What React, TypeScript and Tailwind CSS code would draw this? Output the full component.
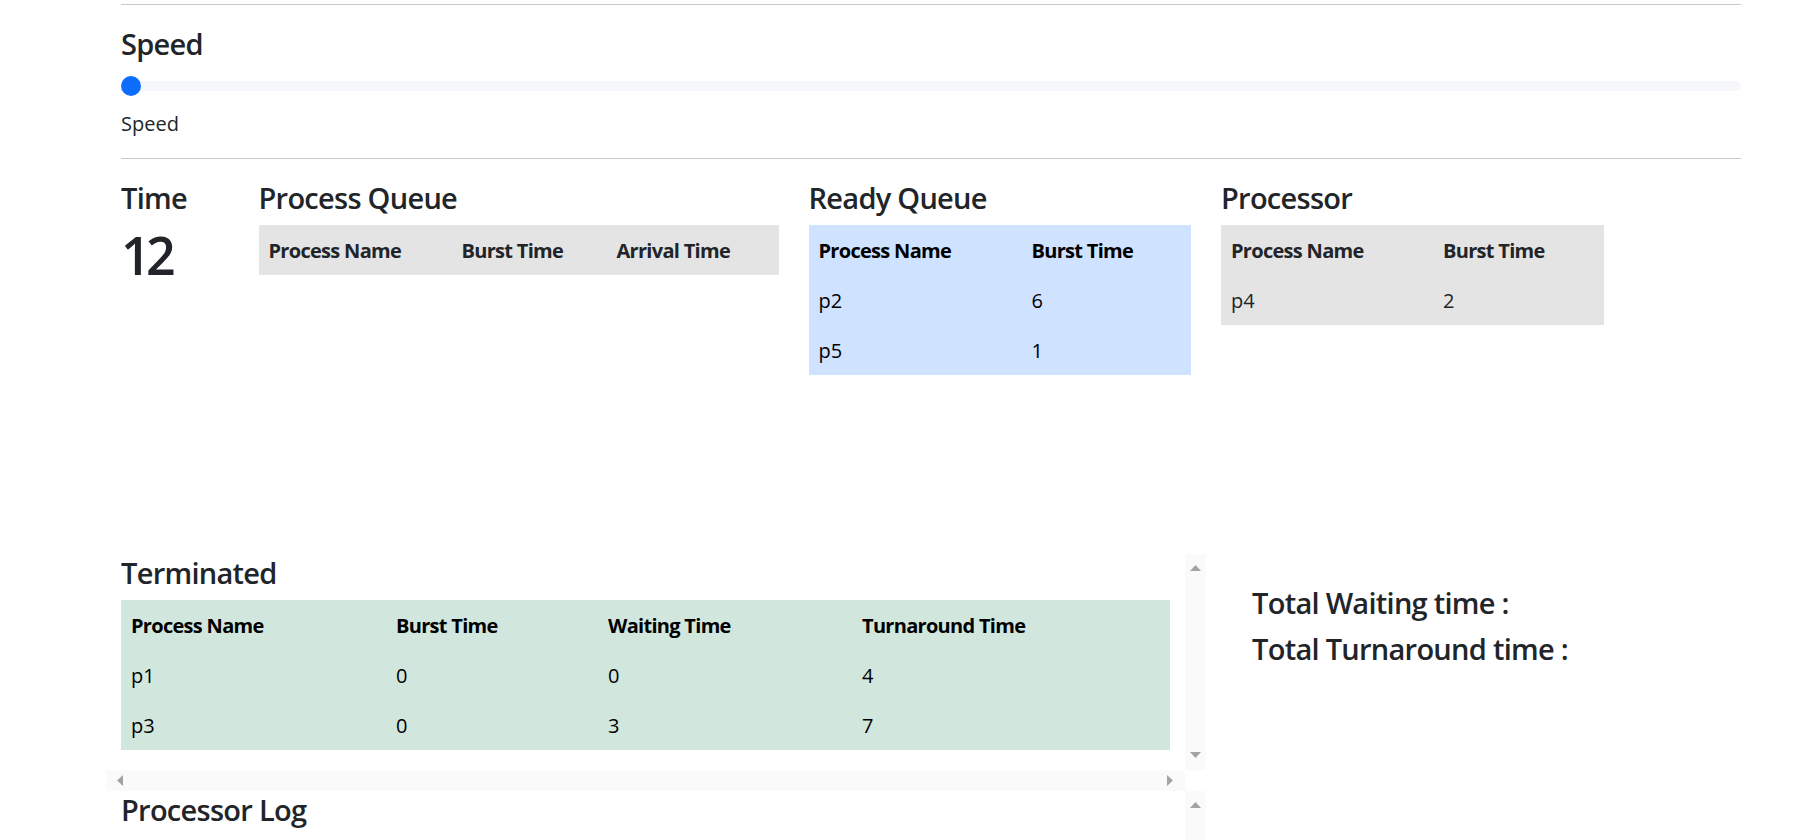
import React from "react";

interface Column {
    title: string;
    width: string;
}

interface QueueTableProps {
    columns: Column[];
    rows: string[][];
    tone: string;
}

function QueueTable({ columns, rows, tone }: QueueTableProps) {
    return (
        <table className={`w-full table-fixed border-collapse ${tone}`}>
            <thead>
                <tr>
                    {columns.map((col) => (
                        <th
                            key={col.title}
                            className={`${col.width} px-[10px] pt-[11px] pb-[9px] text-left font-bold leading-[30px] tracking-[-0.035em]`}
                        >
                            {col.title}
                        </th>
                    ))}
                </tr>
            </thead>
            <tbody>
                {rows.map((row, i) => (
                    <tr key={i}>
                        {row.map((cell, j) => (
                            <td key={j} className="px-[10px] pt-[11px] pb-[9px] leading-[30px]">
                                {cell}
                            </td>
                        ))}
                    </tr>
                ))}
            </tbody>
        </table>
    );
}

function Heading({ children }: { children: React.ReactNode }) {
    return (
        <h4 className="mb-[9px] pt-px text-[29px] font-semibold leading-[36px] tracking-[-0.025em]">
            {children}
        </h4>
    );
}

function ArrowUp() {
    return (
        <svg width="11" height="6" viewBox="0 0 11 6">
            <path d="M5.5 0L11 6H0z" fill="#a3a3a3" />
        </svg>
    );
}

function ArrowDown() {
    return (
        <svg width="11" height="6" viewBox="0 0 11 6">
            <path d="M0 0H11L5.5 6z" fill="#a3a3a3" />
        </svg>
    );
}

// fake classic scrollbar strips
function VBar() {
    return (
        <div className="flex w-[21px] shrink-0 flex-col items-center justify-between bg-[#fafafa] pt-[11px] pb-[12px]">
            <ArrowUp />
            <ArrowDown />
        </div>
    );
}

function HBar() {
    return (
        <div className="flex flex-1 items-center justify-between bg-[#fafafa] pl-[11px] pr-[12px]">
            <svg width="6" height="11" viewBox="0 0 6 11">
                <path d="M0 5.5L6 0V11z" fill="#a3a3a3" />
            </svg>
            <svg width="6" height="11" viewBox="0 0 6 11">
                <path d="M6 5.5L0 0V11z" fill="#a3a3a3" />
            </svg>
        </div>
    );
}

export default function App() {
    return (
        <div className="h-[840px] overflow-hidden bg-white font-['Open_Sans','Noto_Sans',sans-serif] text-[20px] leading-[30px] text-[#212529]">
            <div className="ml-[121px] w-[1620px] pt-[4px]">
                <div className="h-px bg-[#c9c9c9]" />

                <div className="mt-[20px]">
                    <Heading>Speed</Heading>
                    <div className="flex h-[30px] items-center">
                        <div className="flex h-[10px] w-full items-center rounded-full bg-[#f5f7fa]">
                            <div className="h-5 w-5 shrink-0 rounded-full bg-[#0d6efd]" />
                        </div>
                    </div>
                    <p className="mt-[8px]">Speed</p>
                </div>

                <div className="mt-[19px] h-px bg-[#c9c9c9]" />

                <div className="mt-[20px] flex gap-[30px]">
                    <div className="w-[107.5px]">
                        <Heading>Time</Heading>
                        <h1 className="text-[52px] font-semibold leading-[60px] tracking-[-0.09em]">12</h1>
                    </div>
                    <div className="w-[520px]">
                        <Heading>Process Queue</Heading>
                        <QueueTable
                            tone="bg-[#e4e4e4] text-[#212529]"
                            columns={[
                                { title: "Process Name", width: "w-[193px]" },
                                { title: "Burst Time", width: "w-[155px]" },
                                { title: "Arrival Time", width: "w-auto" },
                            ]}
                            rows={[]}
                        />
                    </div>
                    <div className="w-[382.5px]">
                        <Heading>Ready Queue</Heading>
                        <QueueTable
                            tone="bg-[#cfe2ff] text-black"
                            columns={[
                                { title: "Process Name", width: "w-[213px]" },
                                { title: "Burst Time", width: "w-auto" },
                            ]}
                            rows={[
                                ["p2", "6"],
                                ["p5", "1"],
                            ]}
                        />
                    </div>
                    <div className="w-[382.5px]">
                        <Heading>Processor</Heading>
                        <QueueTable
                            tone="bg-[#e4e4e4] text-[#212529]"
                            columns={[
                                { title: "Process Name", width: "w-[212px]" },
                                { title: "Burst Time", width: "w-auto" },
                            ]}
                            rows={[["p4", "2"]]}
                        />
                    </div>
                </div>

                <div className="mt-[179px] -ml-[15px] flex">
                    <div className="w-[1100px]">
                        <div className="flex h-[237px] flex-col">
                            <div className="flex h-[216px]">
                                <div className="flex-1 px-[15px]">
                                    <Heading>Terminated</Heading>
                                    <QueueTable
                                        tone="bg-[#d1e7dd] text-black"
                                        columns={[
                                            { title: "Process Name", width: "w-[265px]" },
                                            { title: "Burst Time", width: "w-[212px]" },
                                            { title: "Waiting Time", width: "w-[254px]" },
                                            { title: "Turnaround Time", width: "w-auto" },
                                        ]}
                                        rows={[
                                            ["p1", "0", "0", "4"],
                                            ["p3", "0", "3", "7"],
                                        ]}
                                    />
                                </div>
                                <VBar />
                            </div>
                            <div className="flex h-[21px]">
                                <HBar />
                                <div className="w-[21px] bg-white" />
                            </div>
                        </div>
                        <div className="flex h-[237px]">
                            <div className="flex-1 px-[15px]">
                                <Heading>Processor Log</Heading>
                            </div>
                            <VBar />
                        </div>
                    </div>
                    <div className="flex-1 pl-[46px] pt-[30px]">
                        <Heading>Total Waiting time :</Heading>
                        <Heading>Total Turnaround time :</Heading>
                    </div>
                </div>
            </div>
        </div>
    );
}
